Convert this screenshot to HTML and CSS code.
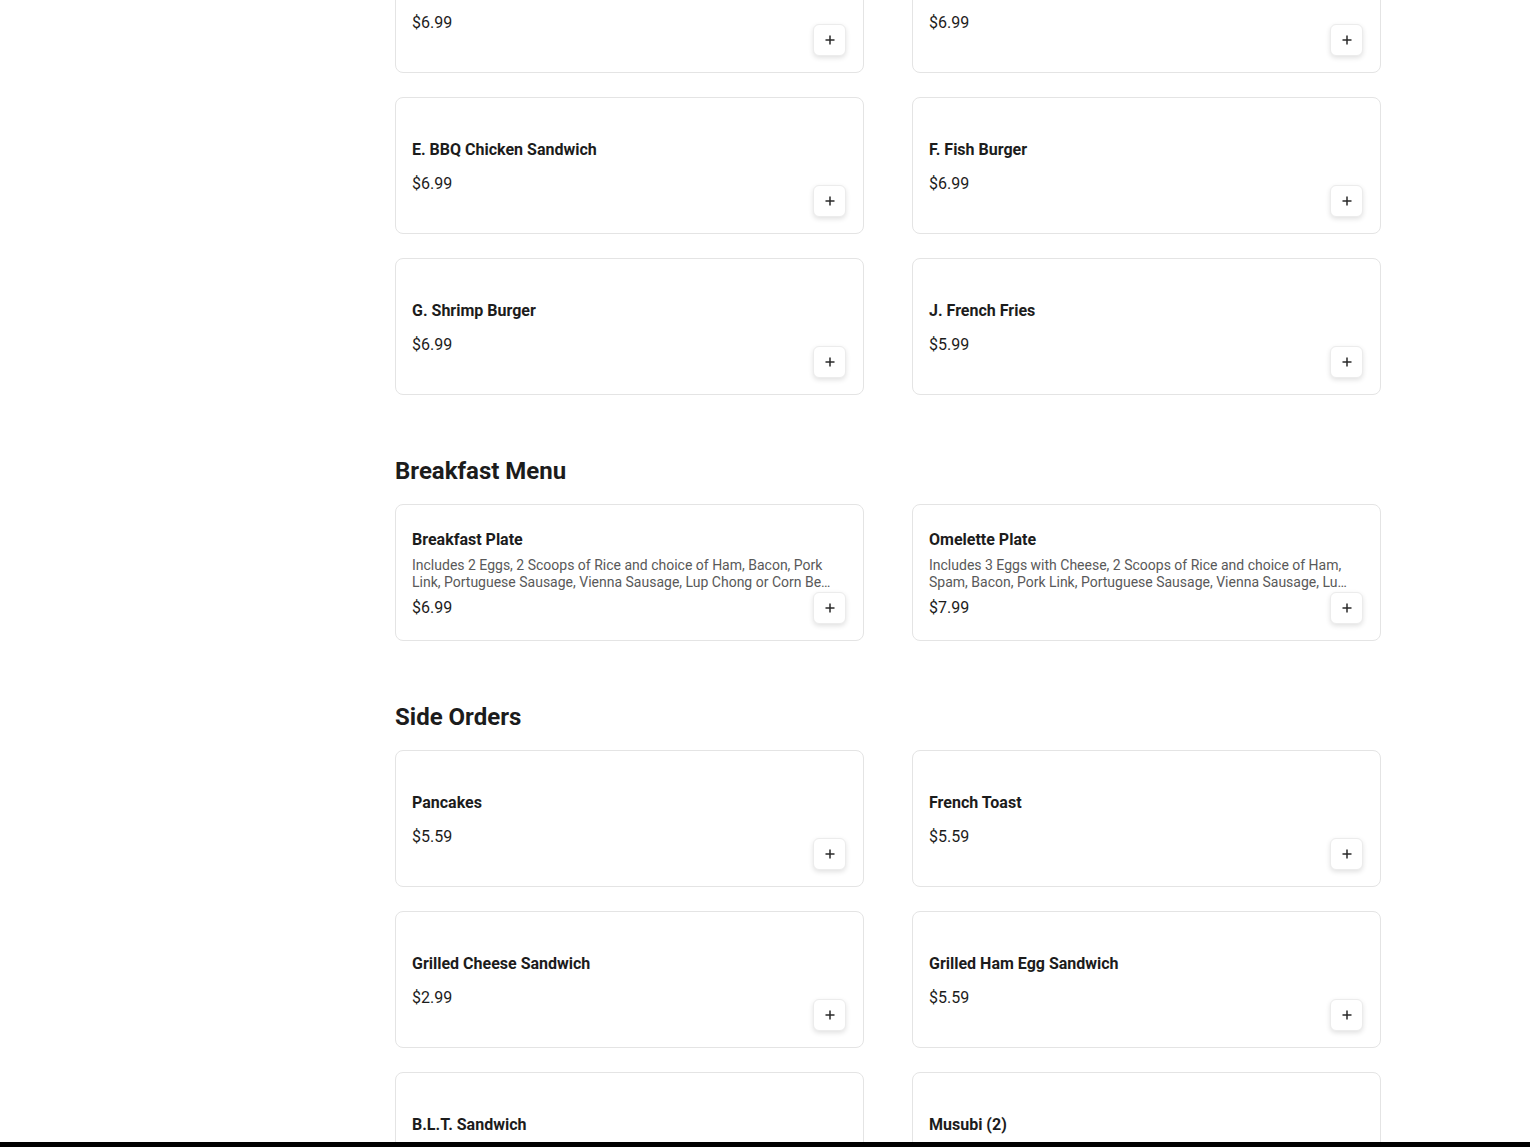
FILE: index.html
```html
<!DOCTYPE html>
<html lang="en">
<head>
<meta charset="utf-8">
<title>Menu</title>
<link rel="stylesheet" href="styles.css">
</head>
<body>
<div class="layout">
  <aside class="side"></aside>
  <main class="menu">
    <section class="section">
      <div class="grid">
        <div class="card">
          <div class="info">
            <div class="title">C. Chicken Katsu Burger</div>
            <div class="desc"></div>
            <div class="price">$6.99</div>
          </div>
          <button class="add" aria-label="Add"><svg viewBox="0 0 12 12" width="12" height="12"><path d="M6 1.5v9M1.5 6h9" /></svg></button>
        </div>
        <div class="card">
          <div class="info">
            <div class="title">D. Ham Sandwich</div>
            <div class="desc"></div>
            <div class="price">$6.99</div>
          </div>
          <button class="add" aria-label="Add"><svg viewBox="0 0 12 12" width="12" height="12"><path d="M6 1.5v9M1.5 6h9" /></svg></button>
        </div>
        <div class="card">
          <div class="info">
            <div class="title">E. BBQ Chicken Sandwich</div>
            <div class="desc"></div>
            <div class="price">$6.99</div>
          </div>
          <button class="add" aria-label="Add"><svg viewBox="0 0 12 12" width="12" height="12"><path d="M6 1.5v9M1.5 6h9" /></svg></button>
        </div>
        <div class="card">
          <div class="info">
            <div class="title">F. Fish Burger</div>
            <div class="desc"></div>
            <div class="price">$6.99</div>
          </div>
          <button class="add" aria-label="Add"><svg viewBox="0 0 12 12" width="12" height="12"><path d="M6 1.5v9M1.5 6h9" /></svg></button>
        </div>
        <div class="card">
          <div class="info">
            <div class="title">G. Shrimp Burger</div>
            <div class="desc"></div>
            <div class="price">$6.99</div>
          </div>
          <button class="add" aria-label="Add"><svg viewBox="0 0 12 12" width="12" height="12"><path d="M6 1.5v9M1.5 6h9" /></svg></button>
        </div>
        <div class="card">
          <div class="info">
            <div class="title">J. French Fries</div>
            <div class="desc"></div>
            <div class="price">$5.99</div>
          </div>
          <button class="add" aria-label="Add"><svg viewBox="0 0 12 12" width="12" height="12"><path d="M6 1.5v9M1.5 6h9" /></svg></button>
        </div>
      </div>
    </section>

    <section class="section">
      <h2 class="heading">Breakfast Menu</h2>
      <div class="grid">
        <div class="card">
          <div class="info">
            <div class="title">Breakfast Plate</div>
            <div class="desc">Includes 2 Eggs, 2 Scoops of Rice and choice of Ham, Bacon, Pork Link, Portuguese Sausage, Vienna Sausage, Lup Chong or Corn Beef Hash.</div>
            <div class="price">$6.99</div>
          </div>
          <button class="add" aria-label="Add"><svg viewBox="0 0 12 12" width="12" height="12"><path d="M6 1.5v9M1.5 6h9" /></svg></button>
        </div>
        <div class="card">
          <div class="info">
            <div class="title">Omelette Plate</div>
            <div class="desc">Includes 3 Eggs with Cheese, 2 Scoops of Rice and choice of Ham, Spam, Bacon, Pork Link, Portuguese Sausage, Vienna Sausage, Lup Chong or Corn Beef Hash.</div>
            <div class="price">$7.99</div>
          </div>
          <button class="add" aria-label="Add"><svg viewBox="0 0 12 12" width="12" height="12"><path d="M6 1.5v9M1.5 6h9" /></svg></button>
        </div>
      </div>
    </section>

    <section class="section">
      <h2 class="heading">Side Orders</h2>
      <div class="grid">
        <div class="card">
          <div class="info">
            <div class="title">Pancakes</div>
            <div class="desc"></div>
            <div class="price">$5.59</div>
          </div>
          <button class="add" aria-label="Add"><svg viewBox="0 0 12 12" width="12" height="12"><path d="M6 1.5v9M1.5 6h9" /></svg></button>
        </div>
        <div class="card">
          <div class="info">
            <div class="title">French Toast</div>
            <div class="desc"></div>
            <div class="price">$5.59</div>
          </div>
          <button class="add" aria-label="Add"><svg viewBox="0 0 12 12" width="12" height="12"><path d="M6 1.5v9M1.5 6h9" /></svg></button>
        </div>
        <div class="card">
          <div class="info">
            <div class="title">Grilled Cheese Sandwich</div>
            <div class="desc"></div>
            <div class="price">$2.99</div>
          </div>
          <button class="add" aria-label="Add"><svg viewBox="0 0 12 12" width="12" height="12"><path d="M6 1.5v9M1.5 6h9" /></svg></button>
        </div>
        <div class="card">
          <div class="info">
            <div class="title">Grilled Ham Egg Sandwich</div>
            <div class="desc"></div>
            <div class="price">$5.59</div>
          </div>
          <button class="add" aria-label="Add"><svg viewBox="0 0 12 12" width="12" height="12"><path d="M6 1.5v9M1.5 6h9" /></svg></button>
        </div>
        <div class="card">
          <div class="info">
            <div class="title">B.L.T. Sandwich</div>
            <div class="desc"></div>
            <div class="price">$5.59</div>
          </div>
          <button class="add" aria-label="Add"><svg viewBox="0 0 12 12" width="12" height="12"><path d="M6 1.5v9M1.5 6h9" /></svg></button>
        </div>
        <div class="card">
          <div class="info">
            <div class="title">Musubi (2)</div>
            <div class="desc"></div>
            <div class="price">$3.99</div>
          </div>
          <button class="add" aria-label="Add"><svg viewBox="0 0 12 12" width="12" height="12"><path d="M6 1.5v9M1.5 6h9" /></svg></button>
        </div>
      </div>
    </section>
  </main>
</div>
<div class="bottom-bar"></div>
</body>
</html>
```

FILE: styles.css
```css
html, body {
  margin: 0;
  padding: 0;
  background: #ffffff;
}

body {
  font-family: Roboto, "Liberation Sans", Arial, sans-serif;
  color: #1c1c1c;
  overflow: hidden;
  height: 1147px;
}

.layout {
  display: grid;
  grid-template-columns: 395px 986px;
}

.menu {
  display: flex;
  flex-direction: column;
  gap: 60px;
  margin-top: -64px;
}

.heading {
  margin: 0 0 17px;
  font-size: 24px;
  line-height: 32px;
  font-weight: 700;
  color: #1c1c1c;
}

.grid {
  display: grid;
  grid-template-columns: 469px 469px;
  column-gap: 48px;
  row-gap: 24px;
}

.card {
  position: relative;
  box-sizing: border-box;
  height: 137px;
  border: 1px solid #e4e4e4;
  border-radius: 8px;
  padding: 16px;
  display: flex;
  align-items: center;
  background: #fff;
}

.info {
  flex: 1;
  display: flex;
  flex-direction: column;
  gap: 5px;
  min-width: 0;
  padding-top: 2px;
  padding-right: 12px;
}

.title {
  font-size: 16px;
  line-height: 24px;
  font-weight: 700;
  color: #1c1c1c;
}

.desc {
  font-size: 14px;
  line-height: 17px;
  color: #595959;
  display: -webkit-box;
  -webkit-line-clamp: 2;
  -webkit-box-orient: vertical;
  overflow: hidden;
}

.price {
  font-size: 16px;
  line-height: 24px;
  color: #1c1c1c;
}

.add {
  position: absolute;
  right: 17px;
  bottom: 16px;
  width: 33px;
  height: 32px;
  padding: 0;
  display: flex;
  align-items: center;
  justify-content: center;
  background: #fff;
  border: 1px solid #ececec;
  border-radius: 6px;
  box-shadow: 0 2px 5px rgba(0, 0, 0, 0.12);
  cursor: pointer;
}

.add svg path {
  stroke: #2a2a2a;
  stroke-width: 1.5;
  fill: none;
}

.bottom-bar {
  position: fixed;
  left: 0;
  right: 0;
  bottom: 0;
  height: 5px;
  background: #000;
}
```
